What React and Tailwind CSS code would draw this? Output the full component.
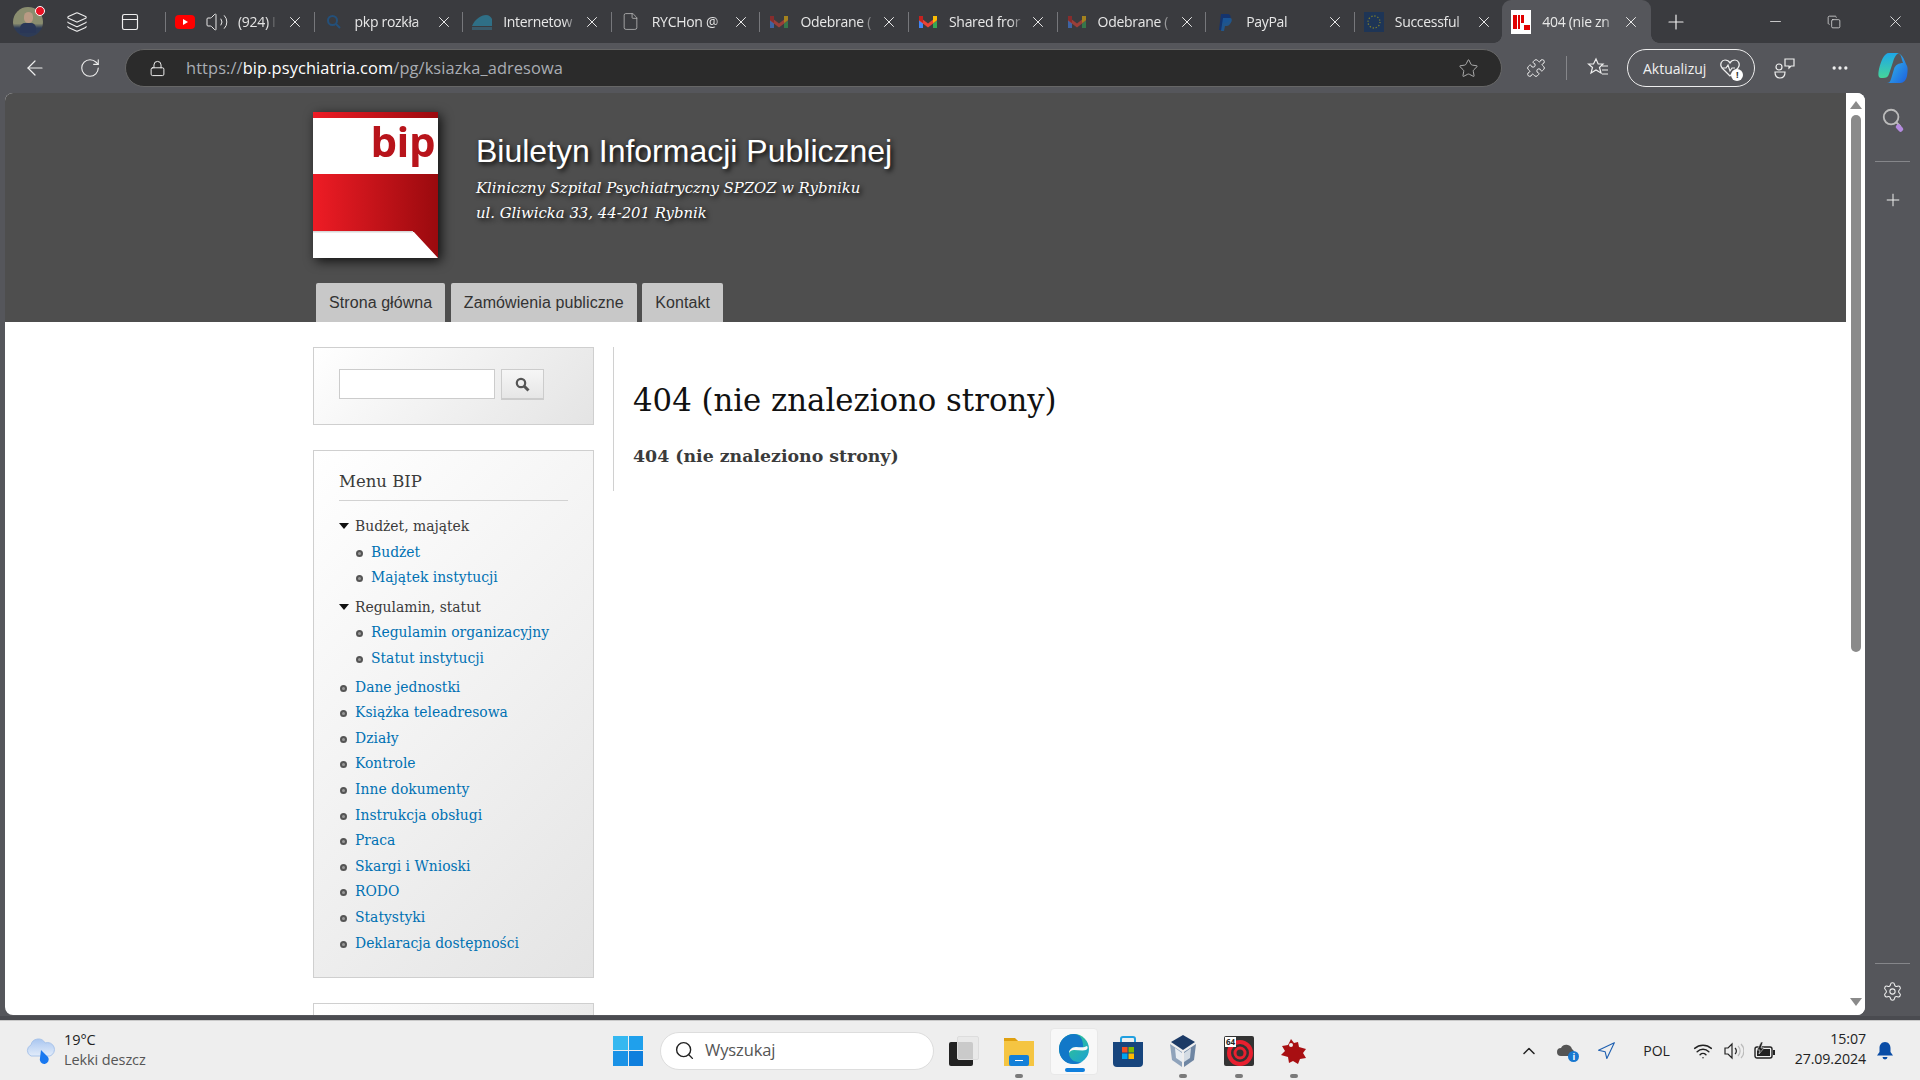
import React from "react";
import { X, Plus, Minus, Copy, ArrowLeft, RotateCw, Lock, Star, Puzzle, Ellipsis, Settings, ChevronUp, Navigation, Wifi, Volume2, Search, PanelTop, Layers, File } from "lucide-react";

const Serif = "font-['DejaVu_Serif','Liberation_Serif',serif]";

const YT = () => (<svg width="20" height="20" viewBox="0 0 20 20"><rect x="0" y="3" width="20" height="14" rx="4" fill="#f00"/><path d="M8 7l5 3-5 3z" fill="#fff"/></svg>);
const Mag = () => (<svg width="18" height="18" viewBox="0 0 18 18" fill="none" stroke="#24507a" strokeWidth="2"><circle cx="7.5" cy="7.5" r="4.5"/><path d="M11 11l4 4"/></svg>);
const Ship = () => (<svg width="20" height="20" viewBox="0 0 20 20"><path d="M0 14C3 7 9 3 14 3c3 0 5 2 6 4v7z" fill="#2f6f86"/><rect y="15" width="20" height="3" fill="#3a5a6a"/></svg>);
const Gmail = ({ dim }) => (<svg width="20" height="20" viewBox="0 0 20 20" opacity={dim ? 0.55 : 1}><path d="M1 5v11h4V9z" fill="#4285f4"/><path d="M19 5v11h-4V9z" fill="#34a853"/><path d="M1 4.5l9 7 9-7v4l-9 7-9-7z" fill="#ea4335"/><path d="M15 4l4 0v4l-4 3z" fill="#fbbc04"/><path d="M1 4h4v7L1 8z" fill="#c5221f"/></svg>);
const PP = () => (<svg width="20" height="20" viewBox="0 0 20 20"><path d="M6 2h6c3 0 4 2 3.500 4.500S12 11 10 11H8l-1 7H4z" fill="#15346e"/><path d="M8 6h7c2 0 2 2 1.500 3.500S14 14 12 14h-2l-1 5H6z" fill="#1b5c9e" opacity=".8"/></svg>);
const EU = () => (<svg width="20" height="20" viewBox="0 0 20 20"><rect width="20" height="20" fill="#1e3556"/><circle cx="10" cy="10" r="6" fill="none" stroke="#7d7d2e" strokeWidth="1.300" strokeDasharray="1.300 1.800"/></svg>);
const Bip = () => (<svg width="20" height="24" viewBox="0 0 20 24"><rect width="20" height="24" fill="#fff"/><path d="M2 5h4v14H2zM7 5h2v14H7zM10 5h3v8h-3z" fill="#e00000"/><rect x="13" y="15" width="6" height="5" fill="#e00000"/></svg>);

const tabs = [
  { t: "(924) I", icon: <YT />, yt: true },
  { t: "pkp rozkła", icon: <Mag /> },
  { t: "Internetow", icon: <Ship /> },
  { t: "RYCHon @", icon: <File size={19} strokeWidth={1} color="#bbb" /> },
  { t: "Odebrane (", icon: <Gmail dim /> },
  { t: "Shared fror", icon: <Gmail /> },
  { t: "Odebrane (", icon: <Gmail dim /> },
  { t: "PayPal", icon: <PP /> },
  { t: "Successful", icon: <EU /> },
  { t: "404 (nie zn", icon: <Bip />, active: true },
];

function Tab({ tab }) {
  return (
    <div className={`relative flex items-center shrink-0 w-[148.600px] pl-[9px] ${tab.active ? "h-[43px] bg-[#55565b] rounded-t-[9px]" : "h-[20px] border-l border-[#76777b]"}`}>
      {tab.active ? <span className="absolute left-[-8px] bottom-0 w-[8px] h-[8px] bg-[radial-gradient(circle_at_0_0,transparent_7.500px,#55565b_8px)]" /> : null}
      {tab.active ? <span className="absolute right-[-8px] bottom-0 w-[8px] h-[8px] bg-[radial-gradient(circle_at_100%_0,transparent_7.500px,#55565b_8px)]" /> : null}
      <div className="w-[20px] flex justify-center shrink-0">{tab.icon}</div>
      {tab.yt ? (
        <div className="flex items-center ml-[10px] w-[79px]">
          <Volume2 size={24} strokeWidth={1} color="#e8e8e8" className="shrink-0" />
          <span className="ml-[9px] whitespace-nowrap text-[14px] text-[#e4e4e4] font-['Open_Sans',sans-serif] tracking-[-0.3px] [mask-image:linear-gradient(90deg,#000_80%,transparent)]">{tab.t}</span>
        </div>
      ) : (
        <div className="ml-[11px] w-[78px] shrink-0 whitespace-nowrap text-[14px] text-[#e8e8e8] font-['Open_Sans',sans-serif] tracking-[-0.3px] [mask-image:linear-gradient(90deg,#000_78%,transparent_97%)]">{tab.t}</div>
      )}
      <X size={18} strokeWidth={1.300} color="#eee" className="ml-[2px] shrink-0" />
    </div>
  );
}

function TopBar() {
  return (
    <div className="h-[43px] bg-[#3a3b3f] flex items-center shrink-0">
      <div className="w-[165px] shrink-0 flex items-center relative h-full">
        <div className="relative w-[30px] h-[30px] ml-[13px] rounded-full bg-[linear-gradient(#8a8d6f_55%,#2d3b57_70%)] flex flex-col items-center pt-[5px]">
          <div className="w-[9px] h-[11px] rounded-full bg-[#b99a84]" />
          <div className="w-[16px] h-[10px] rounded-t-[5px] bg-[#2a3757]" />
          <span className="absolute top-[-1px] right-[-2px] w-[10px] h-[10px] rounded-full bg-[#e81123] border border-white" />
        </div>
        <Layers size={22} strokeWidth={1.200} color="#eee" className="ml-[23px]" />
        <PanelTop size={20} strokeWidth={1.400} color="#eee" className="ml-[32px]" />
      </div>
      {tabs.map((t, i) => (<Tab key={i} tab={t} />))}
      <Plus size={24} strokeWidth={1.200} color="#eee" className="ml-[13px] shrink-0" />
      <div className="ml-auto flex items-center shrink-0 pr-[15px]">
        <Minus size={17} strokeWidth={1.100} color="#eee" />
        <Copy size={14} strokeWidth={1.200} color="#eee" className="ml-[43px]" />
        <X size={19} strokeWidth={1.100} color="#eee" className="ml-[45px]" />
      </div>
    </div>
  );
}

const Copilot = () => (<svg width="30" height="32" viewBox="0 0 30 32"><defs><linearGradient id="c1" x1="0" y1="0" x2="1" y2="1"><stop offset="0" stopColor="#35c6e8"/><stop offset="1" stopColor="#1d5fe0"/></linearGradient><linearGradient id="c2" x1="0" y1="0" x2="0" y2="1"><stop offset="0" stopColor="#1ea7e8"/><stop offset="1" stopColor="#45d59a"/></linearGradient></defs><path d="M11 1h10c-3 1-5 5-6 9l-4 12c-1 3-3 4-6 4H3C0 26 0 22 1 17 3 9 6 1 11 1z" fill="url(#c2)"/><path d="M18 1c4 0 5 2 6 7l1 3c-4 0-8 2-9 6l-3 10c-1 3-2 4-4 4h13c4 0 6-3 7-7 1-6 1-9-1-12-2-5-4-11-10-11z" fill="url(#c1)"/></svg>);

function ToolBar() {
  return (
    <div className="h-[50px] bg-[#55565b] flex items-center shrink-0 relative">
      <ArrowLeft size={24} strokeWidth={1.200} color="#eee" className="ml-[23px]" />
      <RotateCw size={22} strokeWidth={1.200} color="#eee" className="ml-[32px]" />
      <div className="ml-[24px] w-[1377px] h-[38px] rounded-full bg-[#2b2b2b] border border-[#666] flex items-center pl-[23px] pr-[22px]">
        <Lock size={17} strokeWidth={1.400} color="#eee" />
        <div className="ml-[20px] text-[16.400px] tracking-[0.1px] font-['Open_Sans',sans-serif] text-[#a9adb3]">https://<span className="text-white">bip.psychiatria.com</span>/pg/ksiazka_adresowa</div>
        <Star size={21} strokeWidth={1} color="#bdbdbd" className="ml-auto" />
      </div>
      <Puzzle size={20} strokeWidth={1.200} color="#eee" className="ml-[24px]" />
      <div className="ml-[20px] w-[1px] h-[24px] bg-[#85868a]" />
      <svg width="22" height="22" viewBox="0 0 22 22" fill="none" stroke="#eee" strokeWidth="1.200" className="ml-[20px]"><path d="M9 2l2.200 5H16l-3.500 3.500L14 16l-5-3-5 3 1.500-5.500L1.500 7h5z"/><path d="M15 9h6M15 13h6M15 17h6" /></svg>
      <div className="ml-[18px] w-[128px] h-[38px] rounded-full border-[1.500px] border-[#eee] flex items-center pl-[15px] text-[14px] text-[#f0f0f0] font-['Open_Sans',sans-serif] tracking-[0px] shrink-0">
        Aktualizuj
        <div className="relative ml-[13px]">
          <svg width="22" height="20" viewBox="0 0 22 20" fill="none" stroke="#eee" strokeWidth="1.200"><path d="M11 18L3 10C0 6 3 2 6 2c2 0 4 1 5 3 1-2 3-3 5-3 3 0 6 4 3 8z"/><path d="M3 10h4l2-3 2 6 2-3h3"/></svg>
          <span className="absolute right-[-2px] bottom-[-3px] w-[12px] h-[12px] rounded-full bg-white text-[#333] text-[9px] font-bold leading-[12px] text-center">!</span>
        </div>
      </div>
      <svg width="24" height="24" viewBox="0 0 24 24" fill="none" stroke="#eee" strokeWidth="1.200" className="ml-[18px]"><circle cx="6" cy="11" r="3"/><path d="M2 16h10c0 4-2 6-5 6s-5-2-5-6z"/><path d="M12 3h9v7h-3l-2 2v-2h-4z"/></svg>
      <Ellipsis size={20} strokeWidth={2} color="#eee" className="ml-[33px]" />
      <div className="ml-[28px]"><Copilot /></div>
    </div>
  );
}

function Logo() {
  return (
    <svg width="125" height="146" viewBox="0 0 125 146" className="drop-shadow-[3px_3px_6px_rgba(0,0,0,0.8)]">
      <defs>
        <linearGradient id="red" x1="0" x2="1"><stop offset="0" stopColor="#ee1c25"/><stop offset="1" stopColor="#9a0a0e"/></linearGradient>
      </defs>
      <rect width="125" height="146" fill="#fff"/>
      <rect width="125" height="6" fill="url(#red)"/>
      <rect y="62" width="125" height="58" fill="url(#red)"/>
      <path d="M0 119h100l25 27V119z" fill="url(#red)"/>
      <rect y="119" width="100" height="1.500" fill="#d8d8d8"/>
      <text x="122" y="45" textAnchor="end" fontFamily="'Open Sans',sans-serif" fontWeight="700" fontSize="42" letterSpacing="-0.5" fill="#b8141b">bip</text>
    </svg>
  );
}

function Header() {
  return (
    <div className="h-[229px] bg-[#4e4e4e] pl-[308px] pt-[19px] flex flex-col shrink-0">
      <div className="flex h-[146px]">
        <Logo />
        <div className="ml-[38px] pt-[20px] text-white [text-shadow:2px_2px_5px_#000]">
          <div className="font-['Liberation_Sans',sans-serif] text-[32px] leading-[38px]">Biuletyn Informacji Publicznej</div>
          <div className={`${Serif} italic text-[14.850px] leading-[25px] mt-[6px]`}>Kliniczny Szpital Psychiatryczny SPZOZ w Rybniku</div>
          <div className={`${Serif} italic text-[14.850px] leading-[25px]`}>ul. Gliwicka 33, 44-201 Rybnik</div>
        </div>
      </div>
      <div className="flex gap-[5.500px] ml-[3px] mt-auto font-['Liberation_Sans',sans-serif] text-[16px] tracking-[0.08px] text-[#333]">
        {["Strona główna", "Zamówienia publiczne", "Kontakt"].map((n) => (
          <div key={n} className="h-[39px] px-[13px] bg-[#c8c8c8] rounded-t-[2px] flex items-center">{n}</div>
        ))}
      </div>
    </div>
  );
}

const blockBg = "border border-[#cfcfcf] bg-[linear-gradient(135deg,#ffffff,#e4e4e4)]";
const Dot = () => (<span className="absolute left-[-15px] top-[10px] w-[7px] h-[7px] rounded-full border-2 border-[#555] bg-[#999]" />);
const Caret = () => (<span className="absolute left-[-16px] top-[9px] w-0 h-0 border-x-[5px] border-x-transparent border-t-[6px] border-t-[#111]" />);

const Link = ({ children }) => (<li className="relative h-[25.600px] leading-[25.600px]"><Dot /><span className="text-[#0071b3]">{children}</span></li>);

function Sidebar() {
  const items = ["Dane jednostki", "Książka teleadresowa", "Działy", "Kontrole", "Inne dokumenty", "Instrukcja obsługi", "Praca", "Skargi i Wnioski", "RODO", "Statystyki", "Deklaracja dostępności"];
  return (
    <div className={`${Serif} w-[281px] shrink-0 text-[13.900px] text-[#3b3b3b]`}>
      <div className={`${blockBg} h-[78px] pl-[25px] pt-[21px] flex`}>
        <div className="w-[156px] h-[30px] bg-white border border-[#ccc]" />
        <div className="ml-[6px] w-[43px] h-[31px] border border-[#ccc] border-b-2 bg-[linear-gradient(#f6f6f6,#e6e6e6)] flex items-center justify-center">
          <svg width="15" height="15" viewBox="0 0 15 15" fill="none" stroke="#555"><circle cx="6" cy="6" r="4.200" strokeWidth="2.200"/><path d="M9 9l4.500 4.500" strokeWidth="3"/></svg>
        </div>
      </div>
      <div className={`${blockBg} h-[528px] mt-[25px] pl-[25px] pr-[25px] pt-[18px]`}>
        <div className="h-[32px] border-b border-[#d2d2d2] text-[16.500px] leading-[25px]">Menu BIP</div>
        <ul className="mt-[13px] pl-[16px]">
          <li className="relative h-[25.600px] leading-[25.600px]"><Caret />Budżet, majątek</li>
          <ul className="pl-[16px]"><Link>Budżet</Link><Link>Majątek instytucji</Link></ul>
          <li className="relative h-[25.600px] leading-[25.600px] mt-[4px]"><Caret />Regulamin, statut</li>
          <ul className="pl-[16px]"><Link>Regulamin organizacyjny</Link><Link>Statut instytucji</Link></ul>
          <div className="h-[3px]" />
          {items.map((i) => (<Link key={i}>{i}</Link>))}
        </ul>
      </div>
      <div className={`${blockBg} h-[100px] mt-[25px]`} />
    </div>
  );
}

function Scrollbar() {
  return (
    <div className="w-[19px] shrink-0 bg-white flex flex-col items-center pt-[8px] pb-[9px]">
      <span className="w-0 h-0 border-x-[6px] border-x-transparent border-b-[8px] border-b-[#8a8a8a]" />
      <div className="w-[10px] h-[537px] mt-[6px] rounded-full bg-[#8a8a8a]" />
      <span className="mt-auto w-0 h-0 border-x-[6px] border-x-transparent border-t-[8px] border-t-[#8a8a8a]" />
    </div>
  );
}

function Page() {
  return (
    <div className="flex-1 flex min-h-0 bg-[#55565b] pl-[5px] pb-[1px]">
      <div className="w-[1860px] flex rounded-t-[8px] rounded-b-[8px] overflow-hidden bg-white shrink-0">
        <div className="flex-1 flex flex-col min-w-0 overflow-hidden">
          <Header />
          <div className="flex pl-[308px] pt-[25px]">
            <Sidebar />
            <div className="ml-[19px] h-[144px] w-[820px] border-l border-[#d0d0d0] pl-[19px]">
              <h1 className={`${Serif} text-[30.750px] leading-[44px] text-[#111] mt-[31px]`}>404 (nie znaleziono strony)</h1>
              <div className={`${Serif} font-bold text-[17.350px] leading-[24px] text-[#3b3b3b] mt-[22px]`}>404 (nie znaleziono strony)</div>
            </div>
          </div>
        </div>
        <Scrollbar />
      </div>
      <div className="flex-1 flex flex-col items-center text-[#eee] min-w-0">
        <div className="h-[50px] flex items-center justify-center relative mr-[1px]">
          <Search size={22} strokeWidth={2} color="#bbb" />
          <span className="absolute left-[16px] top-[31px] w-[5px] h-[8px] rotate-[-45deg] rounded-[2px] bg-[#b58be0]" />
        </div>
        <div className="w-[35px] h-[1px] bg-[#85868a] mt-[18px]" />
        <Plus size={20} strokeWidth={1.200} className="mt-[28px]" />
        <div className="w-[35px] h-[1px] bg-[#85868a] mt-auto" />
        <Settings size={21} strokeWidth={1.200} className="mt-[17px] mb-[13px]" />
      </div>
    </div>
  );
}

function Taskbar() {
  return (
    <div className="h-[60px] bg-[#eeeeee] border-t-[1px] border-[#c9c9c9] flex items-center relative shrink-0 font-['Open_Sans',sans-serif]">
      <div className="flex items-center ml-[24px] w-[589px] shrink-0">
        <svg width="31" height="30" viewBox="0 0 31 30"><defs><linearGradient id="w" x1="0" y1="0" x2="0" y2="1"><stop offset="0" stopColor="#a9c6f0"/><stop offset="1" stopColor="#e2ecfa"/></linearGradient></defs><path d="M7 20a6 6 0 0 1 0-11 7.500 7.500 0 0 1 14-2 6.500 6.500 0 0 1 5 13z" fill="url(#w)" stroke="#a9c4ea"/><path d="M17 14l7 7a4.500 4.500 0 1 1-8 1z" fill="#1878f0"/></svg>
        <div className="ml-[9px] text-[14.500px] leading-[20px] tracking-[-0.1px] mb-[2px]">
          <div className="text-[#222]">19°C</div>
          <div className="text-[#555]">Lekki deszcz</div>
        </div>
      </div>
      <div className="w-[30px] h-[30px] grid grid-cols-2 grid-rows-2 gap-[1px] shrink-0">
        <div className="bg-[#35b8f0]" /><div className="bg-[#1fa0ec]" /><div className="bg-[#1a92e6]" /><div className="bg-[#0f7fdd]" />
      </div>
      <div className="ml-[17px] w-[274px] h-[38px] rounded-full bg-white border border-[#ddd] flex items-center pl-[13px] shrink-0">
        <Search size={21} strokeWidth={1.600} color="#222" />
        <span className="ml-[10px] text-[16.500px] text-[#555] tracking-[-0.1px]">Wyszukaj</span>
      </div>
      <div className="ml-[15px] relative w-[30px] h-[30px] shrink-0">
        <div className="absolute left-0 bottom-0 w-[24px] h-[24px] bg-[#222] rounded-[2px]" />
        <div className="absolute right-0 top-0 w-[22px] h-[24px] bg-[#e8e8e8]/85 border border-[#ddd] rounded-[2px]" />
      </div>
      <div className="ml-[25px] relative w-[30px] h-[30px] shrink-0">
        <svg width="30" height="30" viewBox="0 0 30 30"><path d="M0 3h11l3 2h16v25H0z" fill="#f5c542"/><path d="M0 2h11l3 3H0z" fill="#dfa010"/><rect x="5" y="19" width="20" height="11" rx="2" fill="#1380d8"/><rect x="11" y="24" width="8" height="1" fill="#fff"/></svg>
        <span className="absolute left-[11px] bottom-[-12px] w-[8px] h-[4px] rounded-full bg-[#7a7a7a]" />
      </div>
      <div className="ml-[16px] relative w-[48px] h-[47px] mt-[1px] bg-[#f8f8f8] border border-[#e8e8e8] rounded-[4px] flex items-center justify-center shrink-0">
        <svg width="30" height="32" viewBox="0 0 30 32" className="mb-[5px]"><defs><linearGradient id="e1" x1="0" y1="0" x2="1" y2="1"><stop offset="0" stopColor="#36d07a"/><stop offset="1" stopColor="#1a9fd8"/></linearGradient></defs><circle cx="15" cy="16" r="15" fill="url(#e1)"/><path d="M15 1C6 1 0 8 0 16c0 9 7 16 16 15 3 0 5-1 7-2-6 1-13-2-13-9 0-3 3-6 7-6 5 0 7 3 7 3S26 1 15 1z" fill="#1278c8"/><path d="M17 14c-4 0-7 3-7 6 1-2 3-3 5-3 4 0 9 1 12 0 2-1 2-3 1-4-3 2-7 1-11 1z" fill="#f8f8f8"/></svg>
        <span className="absolute left-[14px] bottom-[2px] w-[20px] h-[4px] rounded-full bg-[#0f7fdd]" />
      </div>
      <div className="ml-[15px] relative w-[30px] h-[32px] shrink-0">
        <svg width="30" height="32" viewBox="0 0 30 32"><path d="M8 8V4a2 2 0 0 1 2-2h10a2 2 0 0 1 2 2v4" fill="none" stroke="#21a0e0" strokeWidth="2"/><path d="M0 7h30v21a4 4 0 0 1-4 4H4a4 4 0 0 1-4-4z" fill="#17457d"/><rect x="9" y="12" width="5.500" height="5.500" fill="#f25022"/><rect x="15.500" y="12" width="5.500" height="5.500" fill="#7fba00"/><rect x="9" y="18.500" width="5.500" height="5.500" fill="#00a4ef"/><rect x="15.500" y="18.500" width="5.500" height="5.500" fill="#ffb900"/></svg>
      </div>
      <div className="ml-[25px] relative w-[30px] h-[34px] shrink-0">
        <svg width="30" height="34" viewBox="0 0 30 34"><path d="M15 1l12 7-12 8L3 8z" fill="#1b3a66"/><path d="M2 10l12 8v15L4 26z" fill="#8fa3bb"/><path d="M28 10l-12 8v15l10-7z" fill="#6f86a3"/><path d="M7 14l7 5v9l-6-4z" fill="#e8edf2"/><path d="M23 14l-7 5v9l6-4z" fill="#d4dce4"/></svg>
        <span className="absolute left-[11px] bottom-[-10px] w-[8px] h-[4px] rounded-full bg-[#7a7a7a]" />
      </div>
      <div className="ml-[26px] relative w-[30px] h-[30px] shrink-0 bg-[#333] rounded-[2px]">
        <svg width="30" height="30" viewBox="0 0 30 30"><circle cx="16" cy="17" r="11" fill="none" stroke="#e8202f" strokeWidth="4"/><circle cx="16" cy="17" r="5" fill="none" stroke="#e8202f" strokeWidth="3"/></svg>
        <span className="absolute left-[1px] top-[1px] bg-white text-[#222] text-[8px] font-bold leading-[10px] px-[1px]">64</span>
        <span className="absolute left-[11px] bottom-[-12px] w-[8px] h-[4px] rounded-full bg-[#7a7a7a]" />
      </div>
      <div className="ml-[25px] relative w-[30px] h-[30px] shrink-0">
        <svg width="30" height="30" viewBox="0 0 30 30"><path d="M12 3l3 4 4-1 1 5 7 2-3 4 3 5-6 1-2 5-5-3-4 2-1-6-7-2 4-4-3-5 6-1z" fill="#a80f12"/><circle cx="12" cy="9" r="2" fill="#eee"/></svg>
        <span className="absolute left-[11px] bottom-[-12px] w-[8px] h-[4px] rounded-full bg-[#7a7a7a]" />
      </div>
      <div className="ml-auto flex items-center text-[#222] shrink-0 h-full">
        <ChevronUp size={20} strokeWidth={1.800} />
        <div className="relative ml-[17px]">
          <svg width="20" height="16" viewBox="0 0 20 16"><path d="M5 13a4 4 0 0 1 0-8 6 6 0 0 1 11 1 4 4 0 0 1 0 7z" fill="#555"/></svg>
          <span className="absolute right-[-3px] bottom-[-3px] w-[11px] h-[11px] rounded-full bg-[#1878d0] text-white text-[9px] font-bold leading-[11px] text-center">i</span>
        </div>
        <Navigation size={20} strokeWidth={1.300} color="#1d5fb0" className="ml-[20px]" />
        <span className="ml-[27px] text-[14px] tracking-[-0.1px]">POL</span>
        <Wifi size={20} strokeWidth={1.800} className="ml-[23px]" />
        <svg width="20" height="18" viewBox="0 0 20 18" fill="none" stroke="#222" strokeWidth="1.200" className="ml-[11px]"><path d="M1 6h3l4-4v14l-4-4H1z"/><path d="M11 6a4 4 0 0 1 0 6"/><path d="M14 4a7 7 0 0 1 0 10M17 2a10 10 0 0 1 0 14" stroke="#bbb"/></svg>
        <svg width="22" height="18" viewBox="0 0 22 18" className="ml-[10px]"><rect x="1" y="5" width="17" height="11" rx="2" fill="none" stroke="#222" strokeWidth="1.400"/><rect x="3" y="7" width="13" height="7" fill="#222"/><rect x="19" y="8" width="2" height="5" fill="#222"/><path d="M7 0L3 8h3l-1 4 5-6H7l2-6z" fill="#222" stroke="#eee" strokeWidth=".6"/></svg>
        <div className="ml-[19px] text-right text-[14.200px] leading-[20px] tracking-[-0.1px] mb-[3px]">
          <div>15:07</div>
          <div>27.09.2024</div>
        </div>
        <svg width="18" height="20" viewBox="0 0 18 20" fill="#0a4da6" className="ml-[10px] mr-[26px]"><path d="M9 1c-3.500 0-5.500 3-5.500 6v4L1 14.500h16L14.500 11V7C14.500 4 12.500 1 9 1z"/><path d="M6.500 16a2.500 2.500 0 0 0 5 0z"/></svg>
      </div>
    </div>
  );
}

export default function App() {
  return (
    <div className="w-[1920px] h-[1080px] overflow-hidden flex flex-col bg-[#55565b]">
      <TopBar />
      <ToolBar />
      <div className="flex-1 flex flex-col min-h-0 pb-[4px] bg-[#4a4b50]"><Page /></div>
      <Taskbar />
    </div>
  );
}
